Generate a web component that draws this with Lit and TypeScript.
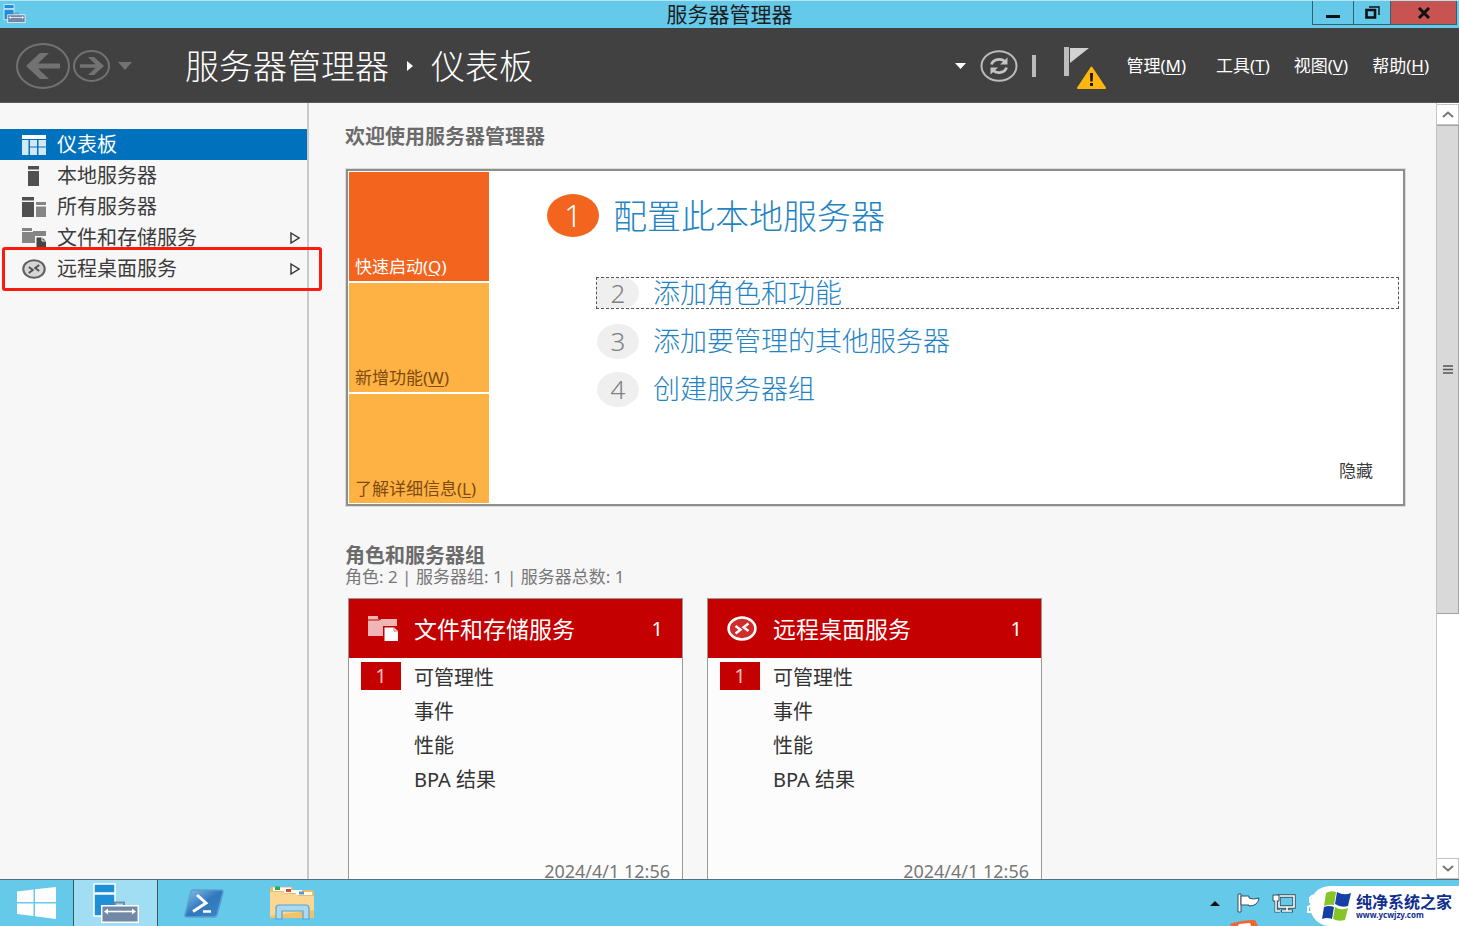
import { LitElement, html, svg, css, nothing } from "lit";
import { customElement, property } from "lit/decorators.js";
import { classMap } from "lit/directives/class-map.js";

const remoteGlyph = (ring: string, fill: string, mark: string) => svg`
  <ellipse cx="15" cy="12.5" rx="13.4" ry="11" fill=${fill} stroke=${ring} stroke-width="2.6"/>
  <path d="M8.5 10 L13.5 13.7 L8.5 17.5 M21.5 7.5 L16.5 11.3 L21.5 15" fill="none" stroke=${mark} stroke-width="2.4"/>`;

const icons: Record<string, unknown> = {
  dashboard: html`<svg class="nav-icon" viewBox="0 0 24 20" aria-hidden="true">
    <path d="M0 0H24V4H0Z" fill="#fff"/>
    <path d="M0 5H6.500V20H0Z M8 5H15V11.500H8Z M16.500 5H24V11.500H16.500Z M8 12.500H15V20H8Z M16.500 12.500H24V20H16.500Z" fill="#d3e8f7"/></svg>`,
  server: html`<svg class="nav-icon" viewBox="0 0 24 20" aria-hidden="true">
    <path d="M6 0H17V3.500H6Z M6 5H17V20H6Z" fill="#505050"/></svg>`,
  servers: html`<svg class="nav-icon" viewBox="0 0 24 20" aria-hidden="true">
    <path d="M0 0H12V3.500H0Z M0 5H12V20H0Z" fill="#505050"/>
    <path d="M14 5H24V8H14Z M14 9.500H24V20H14Z" fill="#858585"/></svg>`,
  files: html`<svg class="nav-icon" viewBox="0 0 24 20" aria-hidden="true">
    <path d="M0 0H10V3H24V8H13V15H0Z" fill="#858585"/><path d="M0 3.500H11" stroke="#f7f7f7"/>
    <path d="M14.500 9.500H20L24 13V20H14.500Z" fill="#454545"/><path d="M20 9.500V13H24" fill="none" stroke="#f7f7f7"/></svg>`,
  remote: html`<svg class="nav-icon" viewBox="0 0 30 25" aria-hidden="true">${remoteGlyph("#606060", "#d6d6d6", "#505050")}</svg>`,
};

const cardIcons: Record<string, unknown> = {
  files: html`<svg class="card-icon" viewBox="0 0 30 25" aria-hidden="true">
    <path d="M0 0H10V3H29V10H15V20H0Z" fill="#f2b5b5"/><path d="M0 4H11L13 3" fill="none" stroke="#c40000"/>
    <path d="M16.500 11.500H26L30 15V25H16.500Z" fill="#fff"/><path d="M26 11V15H30" fill="none" stroke="#d66"/></svg>`,
  remote: html`<svg class="card-icon" viewBox="0 0 30 25" aria-hidden="true">${remoteGlyph("#fff", "#d02c2c", "#fff")}</svg>`,
};

const serverManagerIcon = html`<svg class="sm-icon" viewBox="0 0 46 40" aria-hidden="true">
  <path d="M1 1H22V10H1Z M1 11H22V33H1Z" fill="#1f8fd8" stroke="#fff" stroke-width="1.500"/>
  <path d="M8 22H46V40H8Z" fill="#fff"/><path d="M22 22V19.500H31V22" fill="none" stroke="#7388a5" stroke-width="2"/>
  <path d="M9.500 23.500H44.500V38.500H9.500Z" fill="#7388a5"/>
  <path d="M13 28.500H41" stroke="#fff" stroke-width="1.600"/><path d="M15 25.500L11 28.500L15 31.500Z M39 25.500L43 28.500L39 31.500Z" fill="#fff"/></svg>`;

@customElement("server-card")
class ServerCard extends LitElement {
  @property() icon = "";
  @property() heading = "";
  static styles = css`
    :host { display: flex; flex-direction: column; box-sizing: border-box; min-height: 286px; border: 1px solid #999; background: #fcfcfc; color: #333; }
    .head { display: flex; align-items: center; height: 59px; padding: 0 19px; background: #c40000; color: #fff; }
    .card-icon { width: 30px; height: 25px; margin-right: 16px; }
    h3 { flex: 1; margin: 0; font-size: 23px; font-weight: 400; line-height: 32px; }
    .count { font-size: 20px; }
    ul { list-style: none; margin: 1px 0 0; padding: 0 12px; }
    li { display: flex; align-items: center; height: 34px; font-size: 20px; }
    .badge { width: 40px; height: 28px; margin-right: 13px; text-align: center; line-height: 28px; }
    .badge.alert { background: #c40000; color: #f6bcbc; }
    a { color: inherit; text-decoration: none; }
    time { margin-top: auto; padding: 0 12px; text-align: right; font-size: 18px; line-height: 24px; color: #777; }
  `;
  render() {
    return html`
      <div class="head">${cardIcons[this.icon]}<h3>${this.heading}</h3><span class="count">1</span></div>
      <ul>
        ${["可管理性", "事件", "性能", "BPA 结果"].map((row, i) => html`
          <li><span class=${classMap({ badge: true, alert: i === 0 })}>${i === 0 ? "1" : nothing}</span><a href="#">${row}</a></li>`)}
      </ul>
      <time datetime="2024-04-01T12:56">2024/4/1 12:56</time>`;
  }
}

@customElement("app-root")
class AppRoot extends LitElement {
  static styles = css`
    :host { display: flex; flex-direction: column; height: 100vh; overflow: hidden; background: #f7f7f7; color: #3c3c3c; font-family: "Noto Sans", "Noto Sans CJK SC", sans-serif; font-size: 20px; }
    * { box-sizing: border-box; }
    button { font: inherit; color: inherit; border: 0; padding: 0; background: none; display: flex; align-items: center; justify-content: center; }
    a { color: inherit; text-decoration: none; }
    h1, h2 { margin: 0; }
    svg { display: block; flex: none; }
    u { text-underline-offset: 2px; }

    .titlebar { display: grid; grid-template-columns: 1fr auto 1fr; height: 28px; background: #65c9ea; border-top: 1px solid #b5e5f5; color: #1d1d1d; line-height: 26px; font-size: 21px; }
    .titlebar .sm-icon { width: 23px; height: 19px; margin: 3px 0 0 3px; }
    .window-buttons { display: flex; justify-self: end; height: 24px; margin-right: 2px; border: 1px solid #35616f; border-top: 0; }
    .window-buttons button { width: 40px; }
    .window-buttons .restore { width: 37px; border-left: 1px solid #35616f; }
    .window-buttons .close { width: 66px; background: #c75450; border-left: 1px solid #35616f; }

    .header { display: flex; align-items: center; height: 75px; flex: none; padding: 2px 30px 0 16px; background: #414141; border-bottom: 1px solid #5a5a5a; color: #fff; }
    .crumbs { display: flex; align-items: center; gap: 17px; flex: 1; margin-left: 53px; font-size: 34px; line-height: 48px; }
    .crumbs h1 { font-size: 34px; font-weight: 300; }
    .crumbs span { font-weight: 300; }
    .history { display: flex; align-items: center; gap: 3px; }
    .history .recent { margin-left: 5px; }
    .tools { display: flex; align-items: center; gap: 14px; }
    .flag { margin: 4px 20px 0 14px; }
    .menus { display: flex; gap: 24px; font-size: 17px; line-height: 28px; }
    .menus .wide { margin-right: 6px; }

    .body { display: flex; flex: 1; min-height: 0; }
    .sidebar { width: 309px; flex: none; padding-top: 26px; border-right: 2px solid #c9c9c9; }
    .nav { display: flex; align-items: center; position: relative; height: 31px; padding: 0 7px 0 22px; line-height: 31px; }
    .nav span { flex: 1; margin-left: 11px; }
    .nav.selected { background: #0071bd; color: #fff; }
    .nav-icon { width: 24px; height: 20px; }
    .nav.marked::after { content: ""; position: absolute; inset: -6px -15px -7px 2px; border: 3px solid #fb1a0e; border-radius: 3px; z-index: 2; }

    .main { flex: 1; min-width: 0; overflow: hidden; padding: 18px 31px 0 36px; }
    .main h2 { font-size: 20px; line-height: 32px; font-weight: 700; color: #6b6b6b; }
    .welcome { display: flex; margin: 16px 0 38px 1px; padding: 1px; background: #fff; border: 2px solid #8e8e8e; box-shadow: 0 0 0 1px #dcdcdc; }
    .tiles { display: grid; gap: 2px; width: 140px; flex: none; grid-auto-rows: 109px; }
    .tiles button { align-items: flex-end; justify-content: flex-start; padding: 0 6px; background: #feb243; color: #7d4a10; font-size: 17px; line-height: 28px; white-space: nowrap; }
    .tiles .active { background: #f3651f; color: #fff; }
    .content { display: flex; flex-direction: column; flex: 1; padding: 20px 3px 18px 58px; }
    .first { display: flex; align-items: center; gap: 14px; height: 48px; padding-bottom: 1px; color: #1f83c4; font-size: 34px; line-height: 44px; font-weight: 300; }
    .dot { display: grid; place-items: center; flex: none; width: 52px; height: 43px; border-radius: 50%; background: #f3651f; color: #fff; font-size: 31px; line-height: 43px; }
    ol { list-style: none; display: grid; gap: 16px; margin: 37px 0 0; padding: 0 0 0 49px; }
    .step { display: flex; align-items: center; gap: 14px; height: 32px; color: #1f83c4; font-size: 27px; line-height: 30px; font-weight: 300; border: 1px dashed transparent; }
    .step.focused { border-color: #555; }
    .step .dot { width: 42px; height: 35px; background: #efefef; color: #808080; font-size: 26px; line-height: 35px; }
    .step.focused .dot { height: 30px; line-height: 30px; border-radius: 0 21px 21px 0; }
    .hide { align-self: flex-end; margin: auto 26px 0 0; font-size: 17px; line-height: 28px; }
    .summary { margin: 0 0 12px; font-size: 17px; line-height: 18px; color: #777; }
    .main .roles { line-height: 24px; }
    .cards { display: grid; grid-template-columns: repeat(auto-fill, 335px); gap: 24px; margin-left: 3px; }

    .scroll { display: flex; flex-direction: column; width: 23px; flex: none; border-left: 1px solid #c4c4c4; background: #fff; }
    .scroll button { height: 21px; flex: none; margin-top: 1px; border: 1px solid #c4c4c4; border-left: 0; background: #fff; }
    .thumb { display: grid; place-items: center; height: 63%; background: #d9d9d9; border: 1px solid #a3a3a3; border-left: 0; }
    .track { flex: 1; }

    .taskbar { display: flex; align-items: stretch; position: relative; flex: none; height: 47px; background: #65c9ea; border-top: 1px solid #56707b; }
    .start { width: 73px; }
    .taskbar .running { width: 85px; margin-right: 2px; background: #a1ddf3; border: solid #33596b; border-width: 0 1px; }
    .running .sm-icon { width: 46px; height: 40px; }
    .taskbar .app { width: 88px; }
    .tray { display: flex; align-items: center; gap: 11px; margin-left: auto; padding-right: 144px; }
    .tray .up { margin-right: 6px; }
    .brand { display: flex; align-items: center; gap: 5px; position: absolute; right: 0; bottom: 0; height: 40px; width: 149px; padding-left: 12px; border-radius: 20px 0 0 20px; background: #fff; color: #102e8e; }
    .brand strong, .brand small { display: block; white-space: nowrap; font-weight: 700; }
    .brand strong { font-size: 16px; line-height: 18px; }
    .brand small { font-size: 8px; line-height: 8px; }
    .peek { position: absolute; right: 201px; bottom: 0; }
  `;

  private nav = [
    { icon: "dashboard", label: "仪表板" },
    { icon: "server", label: "本地服务器" },
    { icon: "servers", label: "所有服务器" },
    { icon: "files", label: "文件和存储服务", expandable: true },
    { icon: "remote", label: "远程桌面服务", expandable: true, marked: true },
  ];

  render() {
    return html`
      <div class="titlebar">
        ${serverManagerIcon}
        <span>服务器管理器</span>
        <div class="window-buttons">
          <button aria-label="最小化"><svg width="14" height="10"><path d="M0 7H14V10H0Z" fill="#111"/></svg></button>
          <button class="restore" aria-label="还原"><svg width="15" height="13"><path d="M1.500 4H10V11.500H1.500Z" fill="none" stroke="#111" stroke-width="2.600"/><path d="M4 1H14V9" fill="none" stroke="#111" stroke-width="1.400"/></svg></button>
          <button class="close" aria-label="关闭"><svg width="14" height="12"><path d="M2 1L12 11M12 1L2 11" stroke="#111" stroke-width="3"/></svg></button>
        </div>
      </div>

      <header class="header">
        <div class="history">
          <button aria-label="后退"><svg width="54" height="46" viewBox="0 0 54 46"><ellipse cx="27" cy="23" rx="26" ry="22" fill="none" stroke="#727272" stroke-width="2"/><path d="M10 23L24 10H33L22 20.500H44V25.500H22L33 36H24Z" fill="#727272"/></svg></button>
          <button aria-label="前进"><svg width="37" height="32" viewBox="0 0 37 32"><ellipse cx="18.500" cy="16" rx="17.500" ry="15" fill="none" stroke="#727272" stroke-width="2"/><path d="M31 16L21 7H15L22.500 14.300H7V17.700H22.500L15 25H21Z" fill="#727272"/></svg></button>
          <button class="recent" aria-label="最近"><svg width="14" height="8"><path d="M0 0H14L7 8Z" fill="#727272"/></svg></button>
        </div>
        <div class="crumbs"><h1>服务器管理器</h1><svg width="8" height="10"><path d="M1 0L7 5L1 10Z" fill="#fff"/></svg><span>仪表板</span></div>
        <div class="tools">
          <button aria-label="通知列表"><svg width="11" height="6"><path d="M0 0H11L5.500 6Z" fill="#fff"/></svg></button>
          <button aria-label="刷新"><svg width="38" height="32" viewBox="0 0 38 32"><ellipse cx="19" cy="16" rx="17.500" ry="14.800" fill="none" stroke="#bbb" stroke-width="2"/><path d="M11.500 14.500C13 9 21 8 25 11.500M26.500 17.500C25 23 17 24 13 20.500" fill="none" stroke="#c4c4c4" stroke-width="2.800"/><path d="M27.500 7.500V14.500H20Z M10.500 24.500V17.500H18Z" fill="#c4c4c4"/></svg></button>
          <svg width="4" height="22"><path d="M0 0H4V22H0Z" fill="#bbb"/></svg>
          <button class="flag" aria-label="通知"><svg width="42" height="44" viewBox="0 0 42 44"><path d="M0 1H5V30H0Z" fill="#bdbdbd"/><path d="M6 2H25L6 17Z" fill="#d2d2d2"/><path d="M27.500 21.500L41 42H14Z" fill="#ffb70f" stroke="#ffb70f" stroke-width="2" stroke-linejoin="round"/><path d="M26 27H29L28.700 35.500H26.300Z M26 37H29V40H26Z" fill="#22160a"/></svg></button>
        </div>
        <nav class="menus">
          <a class="wide" href="#">管理(<u>M</u>)</a><a href="#">工具(<u>T</u>)</a><a href="#">视图(<u>V</u>)</a><a href="#">帮助(<u>H</u>)</a>
        </nav>
      </header>

      <div class="body">
        <nav class="sidebar">
          ${this.nav.map((n, i) => html`
            <a href="#" class=${classMap({ nav: true, selected: i === 0, marked: !!n.marked })}>
              ${icons[n.icon]}<span>${n.label}</span>
              ${n.expandable ? html`<svg width="10" height="12" aria-hidden="true"><path d="M1 1L9 6L1 11Z" fill="none" stroke="#333" stroke-width="1.400"/></svg>` : nothing}
            </a>`)}
        </nav>

        <main class="main">
          <h2>欢迎使用服务器管理器</h2>
          <section class="welcome">
            <div class="tiles">
              <button class="active"><span>快速启动(<u>Q</u>)</span></button>
              <button><span>新增功能(<u>W</u>)</span></button>
              <button><span>了解详细信息(<u>L</u>)</span></button>
            </div>
            <div class="content">
              <a class="first" href="#"><span class="dot">1</span><span>配置此本地服务器</span></a>
              <ol>
                ${["添加角色和功能", "添加要管理的其他服务器", "创建服务器组"].map((t, i) => html`
                  <li><a href="#" class=${classMap({ step: true, focused: i === 0 })}><span class="dot">${i + 2}</span><span>${t}</span></a></li>`)}
              </ol>
              <button class="hide">隐藏</button>
            </div>
          </section>

          <h2 class="roles">角色和服务器组</h2>
          <p class="summary">角色: 2 | 服务器组: 1 | 服务器总数: 1</p>
          <div class="cards">
            <server-card icon="files" heading="文件和存储服务"></server-card>
            <server-card icon="remote" heading="远程桌面服务"></server-card>
          </div>
        </main>

        <div class="scroll">
          <button aria-label="向上滚动"><svg width="12" height="7"><path d="M1 6L6 1.500L11 6" fill="none" stroke="#777" stroke-width="2"/></svg></button>
          <div class="thumb"><svg width="10" height="9"><path d="M0 1H10M0 4.500H10M0 8H10" stroke="#555" stroke-width="1.600"/></svg></div>
          <div class="track"></div>
          <button aria-label="向下滚动"><svg width="12" height="7"><path d="M1 1L6 5.500L11 1" fill="none" stroke="#777" stroke-width="2"/></svg></button>
        </div>
      </div>

      <footer class="taskbar">
        <button class="start" aria-label="开始"><svg width="39" height="32" viewBox="0 0 39 32"><path d="M0 4.500L16.500 2.500V15H0Z M18 2.300L39 0V15H18Z M0 16.500H16.500V29L0 27Z M18 16.500H39V32L18 29.300Z" fill="#fff"/></svg></button>
        <button class="running" aria-label="服务器管理器">${serverManagerIcon}</button>
        <button class="app" aria-label="PowerShell"><svg width="40" height="29" viewBox="0 0 40 29">
          <defs><linearGradient id="ps" x1="0" y1="0" x2="1" y2="1"><stop offset="0" stop-color="#8cc4ea"/><stop offset=".5" stop-color="#2f78bd"/><stop offset="1" stop-color="#3d86c6"/></linearGradient></defs>
          <path d="M9 1H37Q39.500 1 39 3.500L33 26Q32.500 28 30 28H3Q.500 28 1 25.500L7 3Q7.500 1 9 1Z" fill="url(#ps)" stroke="#5c9fd2" stroke-width="1.500"/>
          <path d="M13 6L22 14L9 22.500" fill="none" stroke="#fff" stroke-width="3"/><path d="M19 22.500H27" stroke="#fff" stroke-width="2.500"/></svg></button>
        <button class="app" aria-label="文件资源管理器"><svg width="46" height="36" viewBox="0 0 46 36">
          <path d="M1 31V4Q1 2 3 2H22Q24 2 24 5H42Q45 5 45 8V33H1Z" fill="#efbd62"/>
          <path d="M4 2.500H22V6H4Z M15 5H33V8H15Z M27 7H43V10H27Z" fill="#fff"/>
          <path d="M6 1.500H11V5H6Z" fill="#34a853"/><path d="M17 4H22V7H17Z" fill="#d24b35"/><path d="M30 6.500H35V9.500H30Z" fill="#4f99dd"/>
          <path d="M1 7H14L16 9H27L29 11H45V33H1Z" fill="#fbd793"/><path d="M1 31L45 25V33H1Z" fill="#f3c267"/>
          <path d="M7 34V23Q7 20 10 20H37Q40 20 40 23V34H34V26H13V34Z" fill="#a8daf4" stroke="#5ba3d0" stroke-width="1.200"/></svg></button>
        <div class="tray">
          <button class="up" aria-label="显示隐藏的图标"><svg width="10" height="5"><path d="M0 5L5 0L10 5Z" fill="#111"/></svg></button>
          <button aria-label="操作中心"><svg width="24" height="20"><path d="M1 1H4V19H1Z" fill="#fff" stroke="#37505c"/><path d="M4 3H12V5Q16 7 22 5Q21 13 12 13V12H4Z" fill="#fff" stroke="#37505c"/></svg></button>
          <button aria-label="网络"><svg width="24" height="20"><path d="M7 3H22V14H7Z" fill="#65c9ea" stroke="#37505c" stroke-width="3.400"/><path d="M15 14V18M9 18H21" stroke="#37505c" stroke-width="3"/><path d="M7 3H22V14H7Z M15 14V18M10 18H20" fill="none" stroke="#fff" stroke-width="1.600"/><path d="M1 2H7V8H1Z" fill="#fff" stroke="#37505c"/><path d="M4 8V18H8" fill="none" stroke="#37505c" stroke-width="3"/><path d="M4 7V18H8" fill="none" stroke="#fff" stroke-width="1.500"/></svg></button>
          <svg width="8" height="20"><path d="M6 2L3 5V9H6M6 12L1 14V19H8" fill="none" stroke="#fff" stroke-width="2"/></svg>
        </div>
        <svg class="peek" width="28" height="6"><path d="M0 4Q12 0 25 0L28 6H1Z" fill="#f3652c"/><path d="M8 6L9 4L20 3L21 6Z" fill="#fff"/></svg>
        <div class="brand">
          <svg width="29" height="30" viewBox="0 0 29 30"><path d="M4 2Q9 -1 14 1L12 14Q7 13 2 15Z" fill="#86c428"/><path d="M15 1Q22 5 29 2L26 15Q19 17 13 13Z" fill="#1540a8"/><path d="M2 16Q7 14 12 16L10 28Q5 26 0 28Z" fill="#1540a8"/><path d="M13 16Q19 20 26 17L23 29Q16 31 11 28Z" fill="#86c428"/></svg>
          <div><strong>纯净系统之家</strong><small>www.ycwjzy.com</small></div>
        </div>
      </footer>`;
  }
}
